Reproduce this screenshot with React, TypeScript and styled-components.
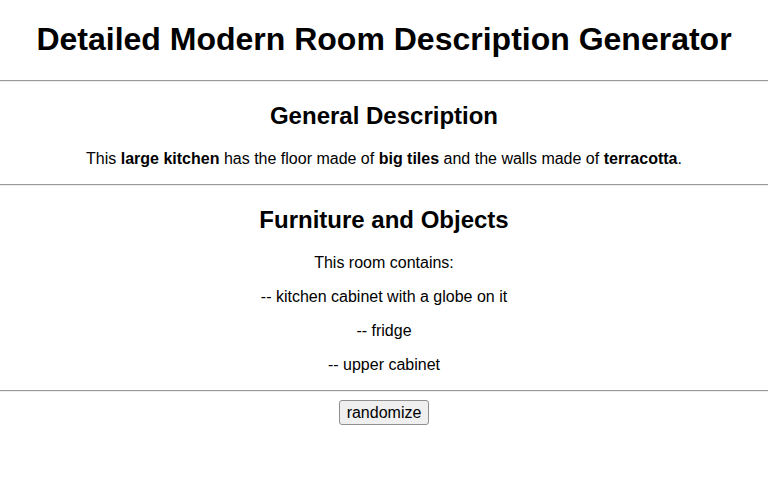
import { FC } from 'react';
import styled, { createGlobalStyle } from 'styled-components';

const GlobalStyle = createGlobalStyle`
  body {
    margin: 0;
    background: #fff;
    color: #000;
    font-family: "Liberation Sans", Arial, sans-serif;
  }
`;

const Page = styled.div`
  text-align: center;
`;

const Title = styled.h1`
  font-size: 32px;
  font-weight: 700;
  margin: 21.44px 0;
`;

const Divider = styled.hr`
  margin: 8px 0;
  border: none;
  border-top: 1px solid #9a9a9a;
  border-bottom: 1px solid #eeeeee;
  height: 0;
`;

const Section = styled.section``;

const SectionTitle = styled.h2`
  font-size: 24px;
  font-weight: 700;
  margin: 19.92px 0;
`;

const Line = styled.p`
  font-size: 16px;
  margin: 16px 0;
`;

const ButtonRow = styled.div`
  display: flex;
  justify-content: center;
`;

const RandomButton = styled.button`
  font-family: "Liberation Sans", Arial, sans-serif;
  font-size: 16px;
  line-height: 19px;
  color: #000;
  background: #efefef;
  border: 1px solid #8f8f8f;
  border-radius: 3px;
  padding: 2px 7px;
  cursor: pointer;
`;

const items = ['kitchen cabinet with a globe on it', 'fridge', 'upper cabinet'];

const App: FC = () => (
  <Page>
    <GlobalStyle />
    <Title>Detailed Modern Room Description Generator</Title>
    <Divider />
    <Section>
      <SectionTitle>General Description</SectionTitle>
      <Line>
        This <b>large kitchen</b> has the floor made of <b>big tiles</b> and the walls made of{' '}
        <b>terracotta</b>.
      </Line>
    </Section>
    <Divider />
    <Section>
      <SectionTitle>Furniture and Objects</SectionTitle>
      <Line>This room contains:</Line>
      {items.map((item) => (
        <Line key={item}>-- {item}</Line>
      ))}
    </Section>
    <Divider />
    <ButtonRow>
      <RandomButton>randomize</RandomButton>
    </ButtonRow>
  </Page>
);

export default App;
